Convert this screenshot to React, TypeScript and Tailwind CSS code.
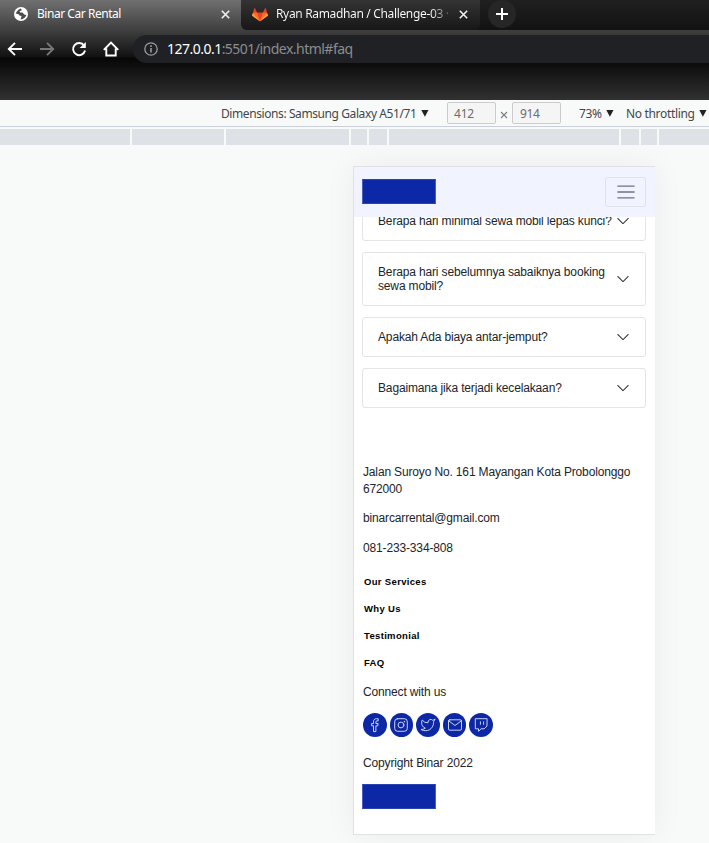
import React from "react";

const Close = () => (
  <svg width="9" height="9" viewBox="0 0 9 9" className="shrink-0" fill="none" stroke="#f1f1f1" strokeWidth="1.6">
    <path d="M.8.8l7.4 7.4M8.2.8L.8 8.2" />
  </svg>
);

const Caret = () => (
  <svg width="8" height="7" viewBox="0 0 8 7" className="shrink-0" fill="#222"><path d="M.3 0h7.2L3.9 6.8z" /></svg>
);

const Chevron = () => (
  <svg width="14" height="14" viewBox="0 0 16 16" className="shrink-0" fill="#212529">
    <path d="M1.646 4.646a.5.5 0 0 1 .708 0L8 10.293l5.646-5.647a.5.5 0 0 1 .708.708l-6 6a.5.5 0 0 1-.708 0l-6-6a.5.5 0 0 1 0-.708z" />
  </svg>
);

const Globe = () => (
  <svg width="14" height="14" viewBox="0 0 14 14" className="shrink-0">
    <circle cx="7" cy="7" r="7" fill="#fff" />
    <path d="M6.8 1.5C4.5 2.2 3.2 4 1.6 6.4L4.6 7.2 5.4 8.4 7.6 8.9 6.6 12.4C9.5 12.2 11.6 10.4 12.3 8L10.2 7.4 8.6 5.6 6 5.4 5.6 4.2 7.9 3.2z" fill="#4b4b4b" />
    <path d="M7 4.2l2.6-1.6 2 1.5-1.2 1.4-2-.4zM3.2 8.4l2 1.2.4 2.2-2-1.2z" fill="#fff" />
  </svg>
);

const Gitlab = () => (
  <svg width="16" height="15" viewBox="0 0 16 15" className="shrink-0">
    <path d="M8 14.3L0 8.5 2.6.6 5.1 5.6h5.8L13.4.6 16 8.5z" fill="#e24329" />
    <path d="M8 14.3L5.1 5.7H1L0 8.5zM8 14.3l2.9-8.6H15l1 2.8z" fill="#fc6d26" />
    <path d="M8 14.3L.9 6.6 0 8.5zM8 14.3l7.1-7.7.9 1.9z" fill="#fca326" />
  </svg>
);

const Nav = ({ children, color = "#fff" }: { children: React.ReactNode; color?: string }) => (
  <svg width="16" height="16" viewBox="0 0 16 16" className="shrink-0" fill="none" stroke={color} strokeWidth="1.9">{children}</svg>
);

const Logo = () => <div className="h-[25px] w-[74px] border border-[#4a5fbf] border-b-[#2b43b2] border-t-[#2b43b2] bg-[#0d28a6]" />;

const Item = ({ children, tall }: { children: React.ReactNode; tall?: boolean }) => (
  <div className={`flex w-[284px] shrink-0 items-center justify-between rounded-[3px] border border-[#e3e4e6] bg-white pl-[15px] pr-[15px] text-[12px] leading-[14px] tracking-[-0.15px] text-[#212529] ${tall ? "h-[54px]" : "h-[40px]"}`}>
    <span className="whitespace-nowrap">{children}</span>
    <Chevron />
  </div>
);

const Social = ({ children }: { children: React.ReactNode }) => (
  <div className="flex size-[23.6px] items-center justify-center rounded-full bg-[#0d28a6]">
    <svg width="24" height="24" viewBox="0 0 24 24" className="shrink-0" fill="none" stroke="#dfe4fa" strokeWidth=".9" strokeLinejoin="round" strokeLinecap="round">{children}</svg>
  </div>
);

const rulerMarks = [130, 92, 123, 16, 18, 230, 18, 16];

export default function App() {
  return (
    <div className="flex h-[843px] w-[709px] flex-col overflow-hidden bg-[#f8faf9] font-['Liberation_Sans',Arial,sans-serif]">
      <header className="flex h-[100px] shrink-0 flex-col bg-[linear-gradient(180deg,#707070_0px,#3c3c3c_32px,#111_57px,#060606_58px,#0c0c0c_63px,#303030_99px,#303030_100px)] font-['Noto_Sans','Open_Sans',sans-serif]">
        <div className="flex h-[31px] shrink-0">
          <div className="flex h-[28px] w-[241px] items-center rounded-tl-[6px] pl-[14px] pr-[11px] text-[12px] text-white">
            <Globe />
            <span className="ml-[9px] flex-1 whitespace-nowrap text-[12px] tracking-[-0.46px]">Binar Car Rental</span>
            <Close />
          </div>
          <div className="flex h-[30px] flex-1 rounded-bl-[7px] bg-gradient-to-b from-[#202020] to-[#121212]">
            <div className="flex h-[30px] w-[239px] items-center rounded-b-[6px] bg-gradient-to-b from-[#343434] to-[#171717] pb-[2px] pl-[11px] pr-[12px] text-white">
              <Gitlab />
              <span className="ml-[8px] w-[176px] shrink-0 whitespace-nowrap bg-gradient-to-r from-white from-88% to-[#444] bg-clip-text text-[12px] tracking-[-0.34px] text-transparent">Ryan Ramadhan / Challenge-03 ·</span>
              <span className="ml-auto flex"><Close /></span>
            </div>
            <div className="ml-[8px] flex size-[28px] items-center justify-center rounded-full bg-[#262626]">
              <svg width="12" height="12" viewBox="0 0 12 12" stroke="#fff" strokeWidth="2"><path d="M6 0v12M0 6h12" /></svg>
            </div>
          </div>
        </div>
        <div className="flex h-[36px] items-center pl-[7px]">
          <div className="flex w-[126px] items-center gap-[16px]">
            <Nav><path d="M15 8H2M8 1.8L1.8 8 8 14.2" /></Nav>
            <Nav color="#777"><path d="M1 8h13M8 1.8L14.2 8 8 14.2" /></Nav>
            <Nav><path d="M13.1 4.4A6.1 6.1 0 1 0 14.1 9.6" /><path d="M14.8 1v6H8.7z" fill="#fff" stroke="none" /></Nav>
            <Nav><path d="M.8 8.8L8 1.5l7.2 7.3M3.3 7.5v7h9.4v-7" /></Nav>
          </div>
          <div className="flex h-[28px] flex-1 items-center rounded-l-full bg-[#202124] pl-[11px]">
            <svg width="14" height="14" viewBox="0 0 14 14" fill="none" stroke="#9a9c9f"><circle cx="7" cy="7" r="6.2" strokeWidth="1.3" /><path d="M7 6v4.5M7 3.2v1.7" strokeWidth="1.6" /></svg>
            <span className="ml-[9px] -mt-px whitespace-nowrap text-[14px] tracking-[-0.52px] text-[#8b8d90]"><span className="text-white">127.0.0.1</span>:5501/index.html#faq</span>
          </div>
        </div>
      </header>

      <div className="flex h-[27px] shrink-0 items-center border-b border-[#cbcfd9] pl-[221px] font-['Noto_Sans','Open_Sans',sans-serif] text-[12px] text-[#44474b]">
        <span className="w-[200px] shrink-0 whitespace-nowrap pt-px tracking-[-0.41px]">Dimensions: Samsung Galaxy A51/71</span>
        <Caret />
        <div className="ml-[18px] flex h-[22px] w-[49px] shrink-0 items-center rounded-[2px] border border-[#ccc] bg-[#f5f5f5] pl-[6px] pt-px tracking-[-0.2px] text-[#6c6c6c]">412</div>
        <svg width="8" height="8" viewBox="0 0 8 8" className="mx-[4px] mt-[3px] shrink-0" stroke="#7d8085" strokeWidth="1.2"><path d="M1 1l6 6M7 1L1 7" /></svg>
        <div className="flex h-[22px] w-[49px] shrink-0 items-center rounded-[2px] border border-[#ccc] bg-[#f5f5f5] pl-[7px] pt-px tracking-[-0.4px] text-[#6c6c6c]">914</div>
        <span className="ml-[18px] w-[27px] shrink-0 pt-px tracking-[-0.4px]">73%</span>
        <Caret />
        <span className="ml-[12px] w-[73px] shrink-0 whitespace-nowrap pt-px tracking-[-0.33px]">No throttling</span>
        <Caret />
      </div>

      <div className="mt-[2px] flex h-[16px] shrink-0 gap-[2px]">
        {rulerMarks.map((w, i) => <div key={i} className="shrink-0 bg-[#dee1e6]" style={{ width: w }} />)}
        <div className="flex-1 bg-[#dee1e6]" />
      </div>

      <main className="ml-[353px] mt-[21px] flex h-[669px] w-[302px] shrink-0 flex-col border border-r-0 border-[#dfe1e2] bg-white shadow-[0_0_30px_rgba(0,0,0,0.06)]">
        <nav className="flex h-[50px] shrink-0 items-center justify-between bg-[#f1f3ff] pl-[8px] pr-[9px]">
          <div className="-mt-px"><Logo /></div>
          <div className="flex h-[30px] w-[41px] items-center justify-center rounded-[3px] border border-[#dfe1ec]">
            <svg width="22" height="22" viewBox="0 0 30 30" stroke="#727379" strokeWidth="2" strokeLinecap="round"><path d="M4 7h22M4 15h22M4 23h22" /></svg>
          </div>
        </nav>
        <div className="flex h-[191px] shrink-0 flex-col gap-[11px] pl-[8px]">
          <div className="flex h-[24px] shrink-0 items-end overflow-hidden"><Item>Berapa hari minimal sewa mobil lepas kunci?</Item></div>
          <Item tall>Berapa hari sebelumnya sabaiknya booking<br />sewa mobil?</Item>
          <Item>Apakah Ada biaya antar-jemput?</Item>
          <Item>Bagaimana jika terjadi kecelakaan?</Item>
        </div>
        <footer className="flex flex-col pl-[9px] pt-[56px] text-[12px] leading-[17px] tracking-[-0.15px] text-[#212529]">
          <p>Jalan Suroyo No. 161 Mayangan Kota Probolonggo<br />672000</p>
          <p className="mt-[12px]">binarcarrental@gmail.com</p>
          <p className="mt-[13px]">081-233-334-808</p>
          <ul className="mt-[16px] flex flex-col gap-[10px] pl-px text-[9.5px] font-bold tracking-[0.33px] text-black">
            <li>Our Services</li><li>Why Us</li><li>Testimonial</li><li>FAQ</li>
          </ul>
          <p className="mt-[13px]">Connect with us</p>
          <div className="mt-[12px] flex h-[24px] items-center gap-[3px]">
            <Social><path d="M10.5 18.2v-5.4H8.6v-2.3h1.9V9c0-2.2 1.1-3.3 3-3.3h1.7v2.2H14c-.8 0-1.1.4-1.1 1.2v1.4h2.2l-.3 2.3h-1.9v5.4z" /></Social>
            <Social><rect x="5.7" y="5.7" width="12.6" height="12.6" rx="3" /><circle cx="12" cy="12" r="2.9" /><circle cx="15.3" cy="8.7" r=".3" /></Social>
            <Social><path d="M18.8 6.4a7 7 0 0 1-2 .9 2.8 2.8 0 0 0-4.8 1.9v.6A6.6 6.6 0 0 1 6.2 7s-2.5 5.7 3.1 8.2a7.2 7.2 0 0 1-4.3 1.3c5.7 3.1 12.6 0 12.6-7.3v-.5a4.8 4.8 0 0 0 1.2-2.3z" /></Social>
            <Social><rect x="5.5" y="6.8" width="13" height="10.4" rx="1.3" /><path d="M5.6 7.8L12 12.5l6.4-4.7" /></Social>
            <Social><path d="M17.7 5.7H6.3v10.1h3.2v2.5l2.6-2.5h3.1l2.5-2.5zM11.4 11.3V8.8M14.6 11.3V8.8" /></Social>
          </div>
          <p className="mb-[12px] mt-[18px]">Copyright Binar 2022</p>
          <div className="-ml-px"><Logo /></div>
        </footer>
      </main>
    </div>
  );
}
